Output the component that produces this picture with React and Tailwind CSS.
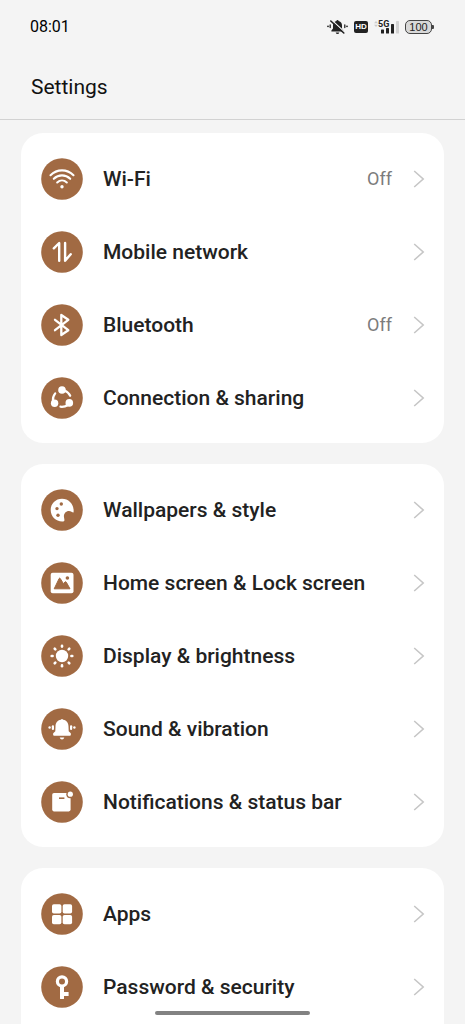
const BROWN = "#a16a43"

const WifiIcon = () => (
  <g fill="none" stroke="white" strokeWidth="2.1" strokeLinecap="round">
    <path d="M-11.5-3.8C-5-10.3 5-10.3 11.5-3.8" />
    <path d="M-8.2-.2C-3.5-4.8 3.5-4.8 8.2-.2" />
    <path d="M-4.8 3.5C-2 .8 2 .8 4.8 3.5" />
    <circle cx="0" cy="7.8" r="1.7" fill="white" stroke="none" />
  </g>
)

const MobileIcon = () => (
  <g fill="none" stroke="white" strokeWidth="2.4" strokeLinecap="round" strokeLinejoin="round">
    <path d="M-8.2-3.7L-2.8-9V8.8" />
    <path d="M3.1-9V8.8L8.7 2.2" />
  </g>
)

const BluetoothIcon = () => (
  <path
    d="M-7-5.2L6.3 5.2L-.7 10V-10L6.3-5.2L-7 5.2"
    fill="none"
    stroke="white"
    strokeWidth="2.3"
    strokeLinecap="round"
    strokeLinejoin="round"
  />
)

const SharingIcon = () => (
  <g fill="white" stroke="none">
    <circle cx="0" cy="-8" r="3.8" />
    <circle cx="-7.4" cy="5.2" r="3.7" />
    <circle cx="7.3" cy="4.9" r="3.8" />
    <g fill="none" stroke="white" strokeWidth="2.2" strokeLinecap="round">
      <path d="M2.5-7.6Q6.6-6 8.2-2.2" />
      <path d="M-9 3.5Q-9.6-1.2-6.8-4.6" />
      <path d="M-1.6 8.7Q2.5 9.2 6 7" />
    </g>
  </g>
)

const PaletteIcon = () => (
  <g>
    <path
      d="M11.6 2C12.2-5.6 7-11.2 0-11.2C-6.4-11.2-11.3-6.3-11.3 0C-11.3 6.8-5.6 12 1.2 11.4C3.4 11.2 2 8.8 1.9 6.6C1.8 3.6 3.8 1 7 1C9.4 1 11.4 3.6 11.6 2Z"
      fill="white"
    />
    <circle cx="-.7" cy="-6" r="1.7" fill={BROWN} />
    <circle cx="-5" cy="-1.4" r="1.7" fill={BROWN} />
    <circle cx="-4" cy="5.3" r="1.7" fill={BROWN} />
  </g>
)

const PictureIcon = () => (
  <g>
    <rect x="-11.3" y="-10.3" width="22.8" height="20.6" rx="2" fill="white" />
    <path
      d="M-7.8 5.8L-2.9-4.4Q-2.3-5.4-1.7-4.4L1.4.7L2.9-1Q3.6-1.8 4.3-.8L8 5.8Z"
      fill={BROWN}
      stroke={BROWN}
      strokeLinejoin="round"
    />
    <circle cx="5.4" cy="-5" r="1.8" fill={BROWN} />
  </g>
)

const SunIcon = () => (
  <g stroke="white" strokeWidth="2.6" strokeLinecap="round">
    <circle cx="0" cy="0" r="6.2" fill="white" stroke="none" />
    {[0, 45, 90, 135, 180, 225, 270, 315].map((angle) => (
      <path key={angle} d="M0-9.4V-10.3" transform={`rotate(${angle})`} />
    ))}
  </g>
)

const BellIcon = () => (
  <g fill="white">
    <path d="M-1.2-9.2Q0-11 1.2-9.2C4.8-8.6 6.4-6 6.5-2.6L6.7 2.2L8.8 4.3Q9.5 6.8 7.8 6.8H-7.8Q-9.5 6.8-8.8 4.3L-6.7 2.2L-6.5-2.6C-6.4-6-4.8-8.6-1.2-9.2Z" />
    <path d="M-2.3 8.5H2.3Q1.8 10.6 0 10.6Q-1.8 10.6-2.3 8.5Z" />
    <rect x="-10.2" y="-3.7" width="2.2" height="4.6" rx="1" />
    <rect x="8" y="-3.7" width="2.2" height="4.6" rx="1" />
    <circle cx="-12.4" cy="-1.5" r="1.2" />
    <circle cx="12.4" cy="-1.5" r="1.2" />
  </g>
)

const NotificationIcon = () => (
  <g>
    <path
      d="M-8-9H8.6V7.6Q8.6 9.4 6.8 9.4H-8.2Q-9.8 9.4-9.8 7.6V-7.2Q-9.8-9-8-9Z"
      fill="white"
    />
    <circle cx="8.3" cy="-7.8" r="4" fill={BROWN} />
    <circle cx="8.3" cy="-7.8" r="2.6" fill="white" />
    <path d="M-3-3.8H2.4" stroke={BROWN} strokeWidth="1.6" />
  </g>
)

const AppsIcon = () => (
  <g fill="white">
    <rect x="-10" y="-9.8" width="9.4" height="9.4" rx="1.8" />
    <rect x=".7" y="-9.8" width="9.4" height="9.4" rx="1.8" />
    <rect x="-10" y=".9" width="9.4" height="9.4" rx="1.8" />
    <rect x=".7" y=".9" width="9.4" height="9.4" rx="1.8" />
  </g>
)

const KeyIcon = () => (
  <g>
    <circle cx="0" cy="-5.6" r="4.6" fill="none" stroke="white" strokeWidth="3.2" />
    <path d="M-2-.5H2V4.9H6.6V8.9H2V11.5Q2 12 1.4 12H-1.4Q-2 12-2 11.4Z" fill="white" />
  </g>
)

const groups = [
  {
    name: "Connections",
    items: [
      { label: "Wi-Fi", icon: WifiIcon, value: "Off" },
      { label: "Mobile network", icon: MobileIcon },
      { label: "Bluetooth", icon: BluetoothIcon, value: "Off" },
      { label: "Connection & sharing", icon: SharingIcon },
    ],
  },
  {
    name: "Personalisation",
    items: [
      { label: "Wallpapers & style", icon: PaletteIcon },
      { label: "Home screen & Lock screen", icon: PictureIcon },
      { label: "Display & brightness", icon: SunIcon },
      { label: "Sound & vibration", icon: BellIcon },
      { label: "Notifications & status bar", icon: NotificationIcon },
    ],
  },
  {
    name: "Apps and security",
    items: [
      { label: "Apps", icon: AppsIcon },
      { label: "Password & security", icon: KeyIcon },
    ],
  },
]

const StatusBar = () => (
  <div className="flex h-[54px] items-center justify-between pl-[30px] pr-[31px]">
    <span className="text-base text-black">08:01</span>
    <div className="flex items-center gap-[6px]">
      {/* Muted bell */}
      <svg width="21" height="16" viewBox="0 0 21 16" fill="#222">
        <path d="M10.5 1Q11.5 1 11.6 2C14.2 2.6 15 4.6 15 6.6V9.6L16.6 11.6V12.4H4.4V11.6L6 9.6V6.6C6 4.6 6.8 2.6 9.4 2Q9.5 1 10.5 1Z" />
        <path d="M8.7 13.4H12.3Q12 15 10.5 15Q9 15 8.7 13.4Z" />
        <path d="M4.8 1.2L17.6 13" stroke="#f4f4f4" strokeWidth="1.3" />
        <path d="M3.8 2L16.8 14" stroke="#222" strokeWidth="1.6" strokeLinecap="round" />
        <path d="M3.2 6V8.6M17.8 6V8.6" stroke="#222" strokeWidth="1.3" strokeLinecap="round" />
        <circle cx="1" cy="7.3" r=".9" />
        <circle cx="20" cy="7.3" r=".9" />
      </svg>
      <span className="flex h-3 w-[14px] items-center justify-center rounded-[2px] bg-[#222] font-['Liberation_Sans',sans-serif] text-[8px] font-bold text-white">
        HD
      </span>
      <svg width="25" height="16" viewBox="0 0 25 16">
        <path d="M0 4.2L2 2L4 4.2ZM0 5.8L2 8L4 5.8Z" fill="#ccc" />
        <rect x="7" y="10.4" width="3" height="4.2" rx=".6" fill="#222" />
        <rect x="12" y="9" width="3" height="5.6" rx=".6" fill="#222" />
        <rect x="17" y="5" width="3" height="9.6" rx=".6" fill="#222" />
        <rect x="22" y="2" width="3" height="12.6" rx=".6" fill="#d2d2d2" />
        <text x="4" y="8" fontSize="9" fontWeight="700" fill="#222">
          5G
        </text>
      </svg>
      <div className="flex items-center">
        <span className="flex h-[14px] w-[27px] items-center justify-center rounded-[5px] border border-[#444] bg-[#d8d8d8] font-['Liberation_Sans',sans-serif] text-[11px] text-[#222]">
          100
        </span>
        <span className="h-1 w-[2px] rounded-r-[1px] bg-[#444]" />
      </div>
    </div>
  </div>
)

const SettingRow = ({ label, value, icon: Icon }) => (
  <button type="button" className="flex h-[73px] w-full cursor-pointer items-center text-left">
    <svg className="mr-5 shrink-0" width="42" height="42" viewBox="-21 -21 42 42">
      <circle cx="0" cy="0" r="20.8" fill={BROWN} />
      <Icon />
    </svg>
    <span className="flex-1 text-[21px] leading-8 font-medium text-[#222]">{label}</span>
    {value && <span className="mr-[21px] text-lg text-[#7c7c7c]">{value}</span>}
    <svg width="12" height="18" viewBox="0 0 12 18" fill="none" stroke="#c6c6c6" strokeWidth="1.6">
      <path d="M1.2 1L10.2 9L1.2 17" />
    </svg>
  </button>
)

const App = () => {
  return (
    <div className="flex h-screen flex-col overflow-hidden bg-[#f4f4f4] font-['Roboto',sans-serif]">
      <header className="shrink-0 border-b border-[#d2d2d2]">
        <StatusBar />
        <h1 className="flex h-[65px] items-center pl-[31px] text-[21px] leading-8 text-[#111]">Settings</h1>
      </header>

      <main className="flex flex-1 flex-col gap-[21px] px-[21px] pt-[13px]">
        {groups.map((group) => (
          <section
            key={group.name}
            aria-label={group.name}
            className="shrink-0 rounded-[22px] bg-white py-[9px] pl-5 pr-[19px] last:flex-1 last:rounded-b-none"
          >
            {group.items.map((item) => (
              <SettingRow key={item.label} {...item} />
            ))}
          </section>
        ))}
      </main>

      {/* Gesture bar */}
      <div className="fixed inset-x-0 bottom-[9px] flex justify-center">
        <div className="h-1 w-1/3 rounded-full bg-[#828282]" />
      </div>
    </div>
  )
}

export default App
